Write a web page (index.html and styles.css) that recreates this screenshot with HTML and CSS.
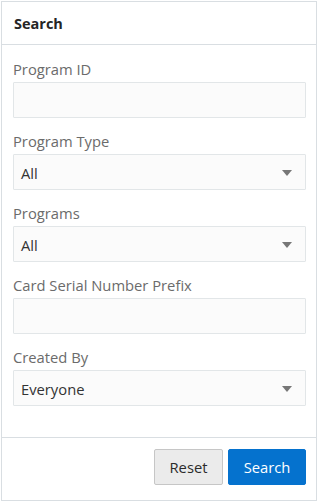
FILE: index.html
```html
<!DOCTYPE html>
<html lang="en">
<head>
<meta charset="utf-8">
<title>Search</title>
<link rel="stylesheet" href="styles.css">
</head>
<body>
<div class="panel">
  <div class="panel-header">Search</div>
  <div class="panel-body">
    <div class="field">
      <label class="field-label">Program ID</label>
      <div class="input"></div>
    </div>
    <div class="field">
      <label class="field-label">Program Type</label>
      <div class="input select"><span class="value">All</span><span class="arrow"></span></div>
    </div>
    <div class="field">
      <label class="field-label">Programs</label>
      <div class="input select"><span class="value">All</span><span class="arrow"></span></div>
    </div>
    <div class="field">
      <label class="field-label">Card Serial Number Prefix</label>
      <div class="input"></div>
    </div>
    <div class="field">
      <label class="field-label">Created By</label>
      <div class="input select"><span class="value">Everyone</span><span class="arrow"></span></div>
    </div>
  </div>
  <div class="panel-footer">
    <button class="btn btn-reset">Reset</button>
    <button class="btn btn-primary">Search</button>
  </div>
</div>
</body>
</html>
```

FILE: styles.css
```css
* { box-sizing: border-box; }
html, body { margin: 0; padding: 0; background: #ffffff; }
body {
  font-family: "Open Sans", "Noto Sans", sans-serif;
  color: #333333;
}
.panel {
  margin: 1px 0 0 1px;
  width: 316px;
  border: 1px solid #d9dee2;
  background: #ffffff;
}
.panel-header {
  height: 43px;
  border-bottom: 1px solid #d9dee2;
  padding: 1px 11px 0 12px;
  display: flex;
  align-items: center;
  font-weight: 700;
  font-size: 14.5px;
  color: #252525;
}
.panel-body {
  padding: 14px 10px 31px 11px;
  display: flex;
  flex-direction: column;
  gap: 13px;
}
.field { display: flex; flex-direction: column; }
.field-label {
  height: 20px;
  line-height: 20px;
  margin-bottom: 3px;
  font-size: 14.75px;
  color: #6b6b6b;
  white-space: nowrap;
}
.input {
  height: 36px;
  border: 1px solid #e2e6e8;
  background: #fbfbfb;
  border-radius: 1px;
}
.select {
  display: flex;
  align-items: center;
  justify-content: space-between;
  padding: 2px 13px 0 7px;
}
.value {
  font-size: 14.75px;
  color: #333333;
}
.arrow {
  width: 0;
  height: 0;
  border-left: 5.5px solid transparent;
  border-right: 5.5px solid transparent;
  border-top: 6px solid #777777;
  margin-top: -1px;
}
.panel-footer {
  border-top: 1px solid #d9dee2;
  padding: 11px 10px 15px 11px;
  display: flex;
  justify-content: flex-end;
  gap: 5px;
}
.btn {
  height: 36px;
  font-family: "Open Sans", "Noto Sans", sans-serif;
  font-size: 14.75px;
  border-radius: 2px;
  padding: 0;
  cursor: pointer;
}
.btn-reset {
  width: 69px;
  background: #ebebeb;
  border: 1px solid #c6c6c6;
  color: #2b2b2b;
}
.btn-primary {
  width: 78px;
  background: #0572ce;
  border: 1px solid #0572ce;
  color: #ffffff;
}
```
